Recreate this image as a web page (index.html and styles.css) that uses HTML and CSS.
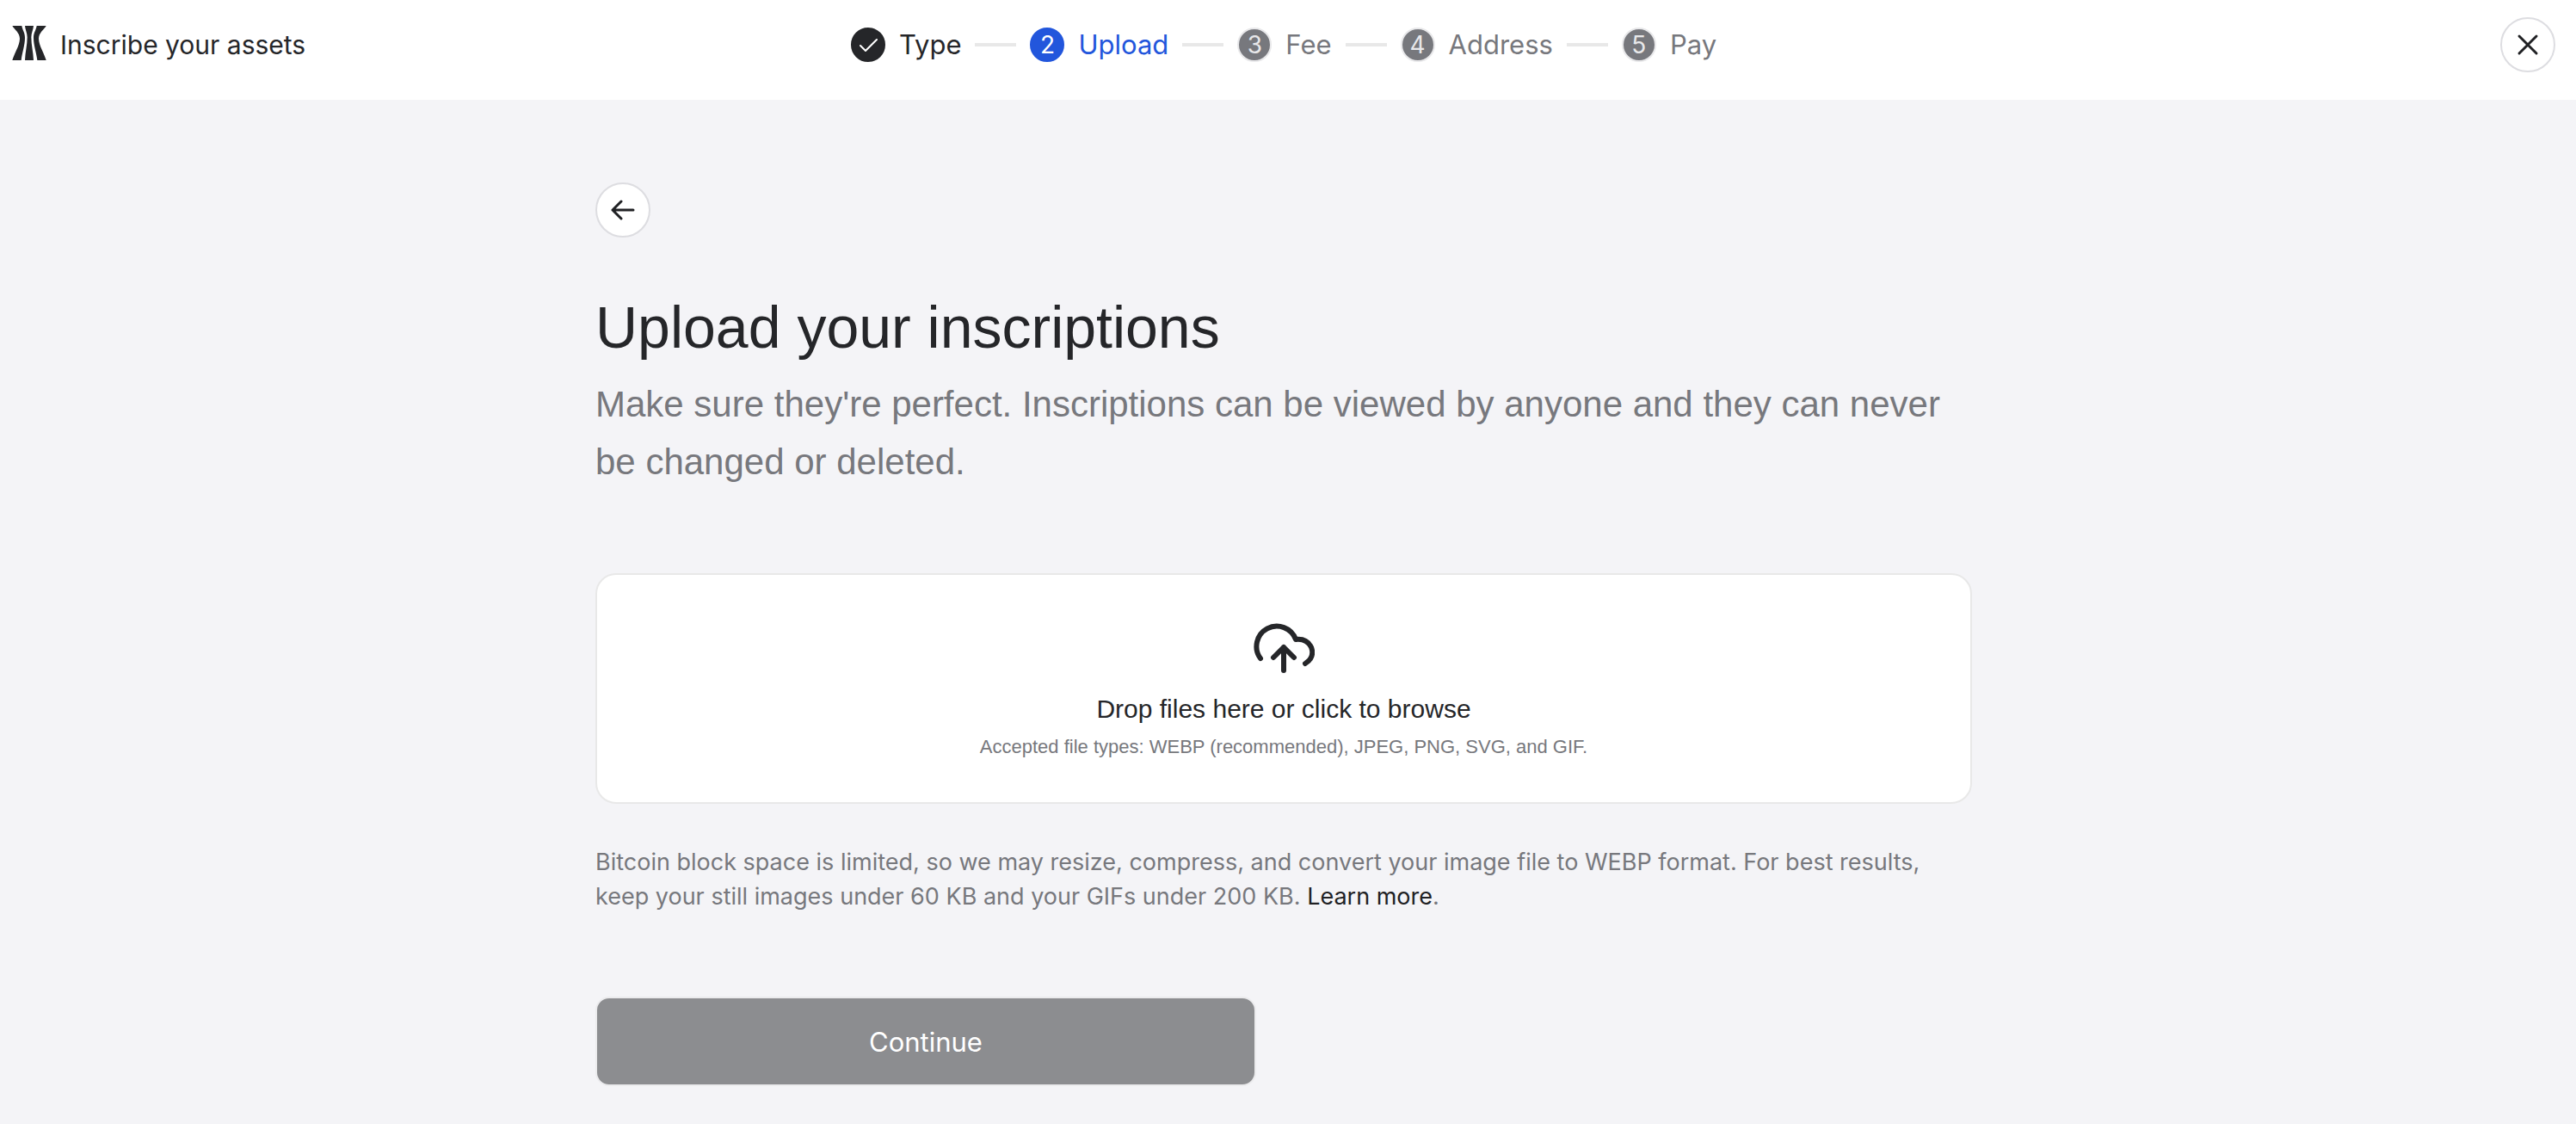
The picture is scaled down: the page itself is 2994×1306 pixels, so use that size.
FILE: index.html
```
<!DOCTYPE html>
<html lang="en">
<head>
	<meta charset="UTF-8">
	<meta name="viewport" content="width=device-width, initial-scale=1">
	<title>Inscribe your assets</title>
	<link rel="stylesheet" href="styles.css">
</head>
<body>
	<header class="header">
		<div class="brand">
			<svg class="logo" viewBox="0 0 118 120" aria-hidden="true">
				<path d="M0 0h33c2 14 11 24 11 41 0 28-10 52-13 79H0c6-22 25-50 26-75C26 24 8 14 0 0z"/>
				<path d="M44 0h30c-1 14-8 24-8 40 0 28 7 52 8 80H44c1-28 8-52 8-80 0-16-7-26-8-40z"/>
				<path d="M118 0H85c-2 14-11 24-11 41 0 28 10 52 13 79h31c-6-22-25-50-26-75 0-21 18-31 26-45z"/>
			</svg>
			<span>Inscribe your assets</span>
		</div>

		<ol class="steps">
			<li class="step done">
				<span class="badge">
					<svg class="check" viewBox="0 0 24 24" aria-hidden="true"><path d="M3 13l6 6L22 6"/></svg>
				</span>
				Type
			</li>
			<li class="step current" aria-current="step"><span class="badge">2</span>Upload</li>
			<li class="step"><span class="badge">3</span>Fee</li>
			<li class="step"><span class="badge">4</span>Address</li>
			<li class="step"><span class="badge">5</span>Pay</li>
		</ol>

		<button class="round-btn close" type="button" aria-label="Close">
			<svg class="icon" viewBox="0 0 32 32" aria-hidden="true"><path d="M6 6l20 20M26 6L6 26"/></svg>
		</button>
	</header>

	<main class="main">
		<button class="round-btn" type="button" aria-label="Back">
			<svg class="icon" viewBox="0 0 32 32" aria-hidden="true"><path d="M28 16H4M14 6L4 16l10 10"/></svg>
		</button>

		<h1 class="title">Upload your inscriptions</h1>
		<p class="subtitle">Make sure they're perfect. Inscriptions can be viewed by anyone and they can never be changed or deleted.</p>

		<label class="dropzone">
			<input class="file" type="file" accept=".webp,.jpeg,.jpg,.png,.svg,.gif" multiple>
			<svg class="cloud" viewBox="0 0 72 60" aria-hidden="true">
				<path d="M9 43A23.500 23.500 0 1 1 50 21c9-1 15 3 18 9 3 8 0 15-7 19"/>
				<path d="M36 57V30M24 42l12-12 12 12"/>
			</svg>
			<span class="drop-title">Drop files here or click to browse</span>
			<span class="drop-types">Accepted file types: WEBP (recommended), JPEG, PNG, SVG, and GIF.</span>
		</label>

		<p class="note">Bitcoin block space is limited, so we may resize, compress, and convert your image file to WEBP format. For best results, keep your still images under 60 KB and your GIFs under 200 KB. <a href="#">Learn more</a>.</p>

		<button class="continue" type="button">Continue</button>
	</main>
</body>
</html>
```
FILE: styles.css
```
* {
	box-sizing: border-box;
}
body {
	margin: 0;
	min-height: 100vh;
	background: #f4f4f7;
	color: #252629;
	font-family: Inter, "Liberation Sans", sans-serif;
}

/* header */
.header {
	display: grid;
	grid-template-columns: 1fr auto 1fr;
	align-items: center;
	padding: 20px 24px 32px 14px;
	background: #fff;
}
.brand {
	display: flex;
	align-items: center;
	gap: 16px;
	font-size: 30px;
}
.logo {
	width: 40px;
	height: 40px;
	margin-bottom: 4px;
	fill: #252629;
}
.steps {
	display: flex;
	gap: 16px;
	margin: 0;
	padding: 0;
	list-style: none;
	font-size: 31px;
	line-height: 40px;
}
.step {
	display: flex;
	align-items: center;
	gap: 16px;
	color: #77787d;
}
.step + .step::before {
	content: "";
	width: 48px;
	height: 4px;
	background: #e8e8e8;
}
.badge {
	display: flex;
	align-items: center;
	justify-content: center;
	width: 40px;
	height: 40px;
	border: 2px solid #e8e8ea;
	border-radius: 50%;
	background: #77787d;
	color: #e8e8ea;
	font-size: 28px;
}
.done {
	color: #252629;
}
.done .badge {
	border-color: #252629;
	background: #252629;
}
.current {
	color: #2256dc;
}
.current .badge {
	border-color: #2256dc;
	background: #2256dc;
	color: #fff;
}
.check {
	width: 24px;
	height: 24px;
	fill: none;
	stroke: #fff;
	stroke-width: 2;
	stroke-linecap: round;
	stroke-linejoin: round;
}
.round-btn {
	display: flex;
	align-items: center;
	justify-content: center;
	width: 64px;
	height: 64px;
	padding: 0;
	border: 2px solid #dddde1;
	border-radius: 50%;
	background: #fff;
	cursor: pointer;
}
.close {
	justify-self: end;
}
.icon {
	width: 32px;
	height: 32px;
	fill: none;
	stroke: #202124;
	stroke-width: 3;
	stroke-linecap: round;
	stroke-linejoin: round;
}

/* content */
.main {
	max-width: 1610px;
	margin: 0 auto;
	padding: 96px 10px 40px 0;
}
.title,
.subtitle,
.dropzone {
	font-family: "Liberation Sans", Arial, sans-serif;
}
.title {
	margin: 60px 0 0;
	font-size: 68px;
	font-weight: 400;
	line-height: 88px;
}
.subtitle {
	margin: 12px 0 0;
	color: #77787d;
	font-size: 42px;
	line-height: 67px;
}
.dropzone {
	display: flex;
	flex-direction: column;
	align-items: center;
	margin-top: 96px;
	padding: 54px 24px 48px;
	border: 2px solid #e8e8e8;
	border-radius: 24px;
	background: #fff;
	cursor: pointer;
}
.file {
	position: absolute;
	width: 1px;
	height: 1px;
	opacity: 0;
}
.cloud {
	width: 72px;
	height: 60px;
	fill: none;
	stroke: #252629;
	stroke-width: 6;
	stroke-linecap: round;
	stroke-linejoin: round;
}
.drop-title {
	margin-top: 22px;
	font-size: 30px;
	line-height: 40px;
}
.drop-types {
	margin-top: 8px;
	color: #77787d;
	font-size: 22px;
	line-height: 32px;
}
.note {
	margin: 48px 0 0;
	color: #77787d;
	font-size: 27px;
	line-height: 40px;
}
.note a {
	color: #202124;
	text-decoration: none;
}
.continue {
	width: 48%;
	height: 104px;
	margin-top: 96px;
	border: 2px solid #ebebed;
	border-radius: 16px;
	background: #8c8d90;
	color: #fff;
	font-family: inherit;
	font-size: 31px;
	cursor: pointer;
}
```
